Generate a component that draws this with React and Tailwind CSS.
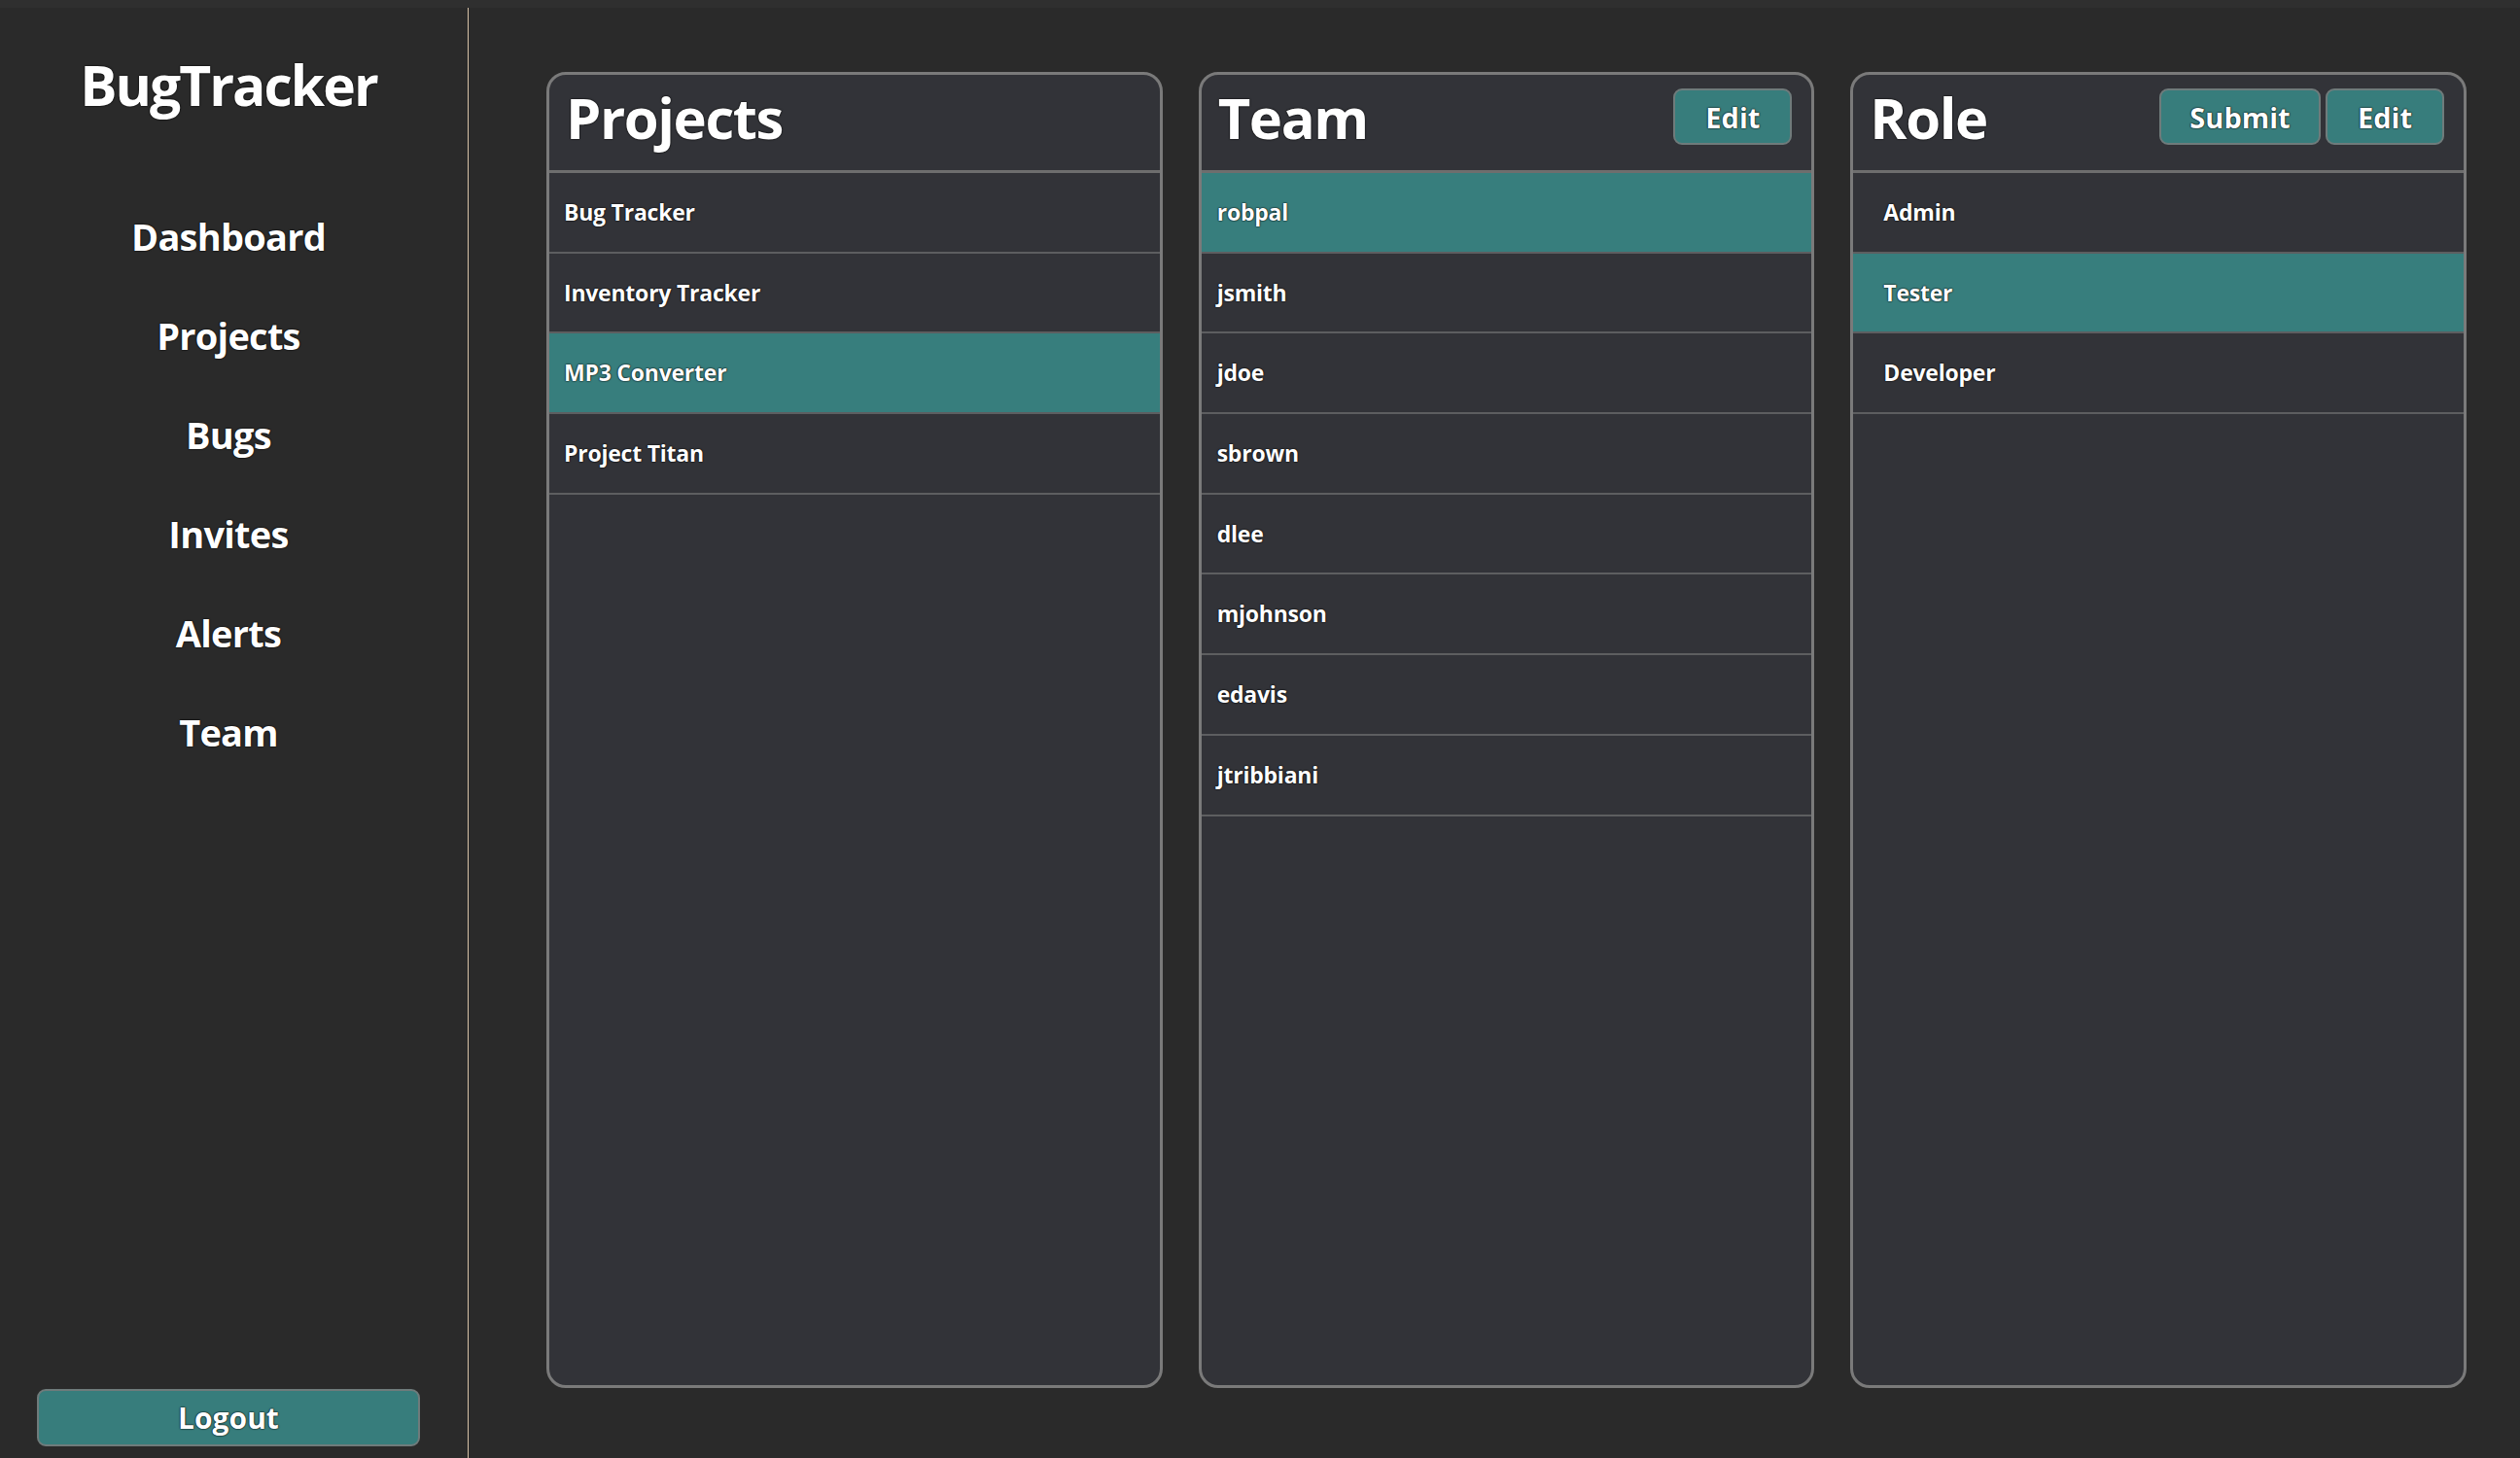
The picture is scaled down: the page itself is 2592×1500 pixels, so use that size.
import React from "react";

const navItems = ["Dashboard", "Projects", "Bugs", "Invites", "Alerts", "Team"];

function HeaderButton({ children, w }) {
  return (
    <button
      className={`h-[58px] ${w} rounded-[9px] border-2 border-[#6f7b7b] bg-[#377d7c] text-white font-bold text-[29px] leading-none flex items-center justify-center [text-shadow:0_0_2px_#000,0_0_1px_#000]`}
    >
      {children}
    </button>
  );
}

function Panel({ title, items, selected, buttons, rowPad }) {
  return (
    <div className="flex-1 min-w-0 flex flex-col rounded-[20px] border-[3px] border-[#7a7a7a] bg-[#323338] overflow-hidden">
      <div className="h-[101px] shrink-0 flex items-center justify-between pl-[17px] pr-[20px] border-b-[3px] border-[#6e6e6e]">
        <div className="text-white font-bold text-[58px] leading-none tracking-[-0.025em] [text-shadow:0_0_2px_#000,0_0_1px_#000] -mt-[10px]">
          {title}
        </div>
        <div className="flex gap-[5px] -mt-[12px]">{buttons}</div>
      </div>
      <div className="flex flex-col">
        {items.map((it, i) => (
          <div
            key={it}
            className={`h-[82.7px] flex items-center border-b-2 border-[#5d5e60] ${rowPad} ${
              i === selected ? "bg-[#377e7d]" : ""
            }`}
          >
            <span className="text-white font-bold text-[23px] leading-none tracking-[-0.01em] [text-shadow:0_0_2px_#000,0_0_1px_#000]">
              {it}
            </span>
          </div>
        ))}
      </div>
    </div>
  );
}

export default function App() {
  return (
    <div
      className="w-[2592px] h-[1500px] flex flex-col bg-[#2a2a2a] overflow-hidden"
      style={{ fontFamily: '"Open Sans", "Noto Sans", sans-serif' }}
    >
      <div className="h-[8px] shrink-0 bg-[#2f2f2f]" />
      <div className="flex-1 flex min-h-0">
        {/* Sidebar */}
        <div className="w-[482px] shrink-0 flex">
          <div className="w-[470px] flex flex-col">
            <div className="mt-[39px] h-[80px] flex items-center justify-center text-white font-bold text-[57px] leading-none tracking-[-0.035em] [text-shadow:0_0_2px_#000,0_0_1px_#000]">
              BugTracker
            </div>
            <nav className="mt-[65px] flex flex-col">
              {navItems.map((n) => (
                <div
                  key={n}
                  className="h-[102px] flex items-center justify-center text-white font-bold text-[38px] leading-none tracking-[-0.02em] [text-shadow:0_0_2px_#000,0_0_1px_#000]"
                >
                  {n}
                </div>
              ))}
            </nav>
            <div className="flex-1" />
            <button className="mx-[38px] mb-[12px] h-[59px] rounded-[9px] border-2 border-[#6f7b7b] bg-[#377d7c] text-white font-bold text-[30px] leading-none flex items-center justify-center [text-shadow:0_0_2px_#000,0_0_1px_#000]">
              Logout
            </button>
          </div>
          <div className="w-[11px]" />
          <div className="w-px bg-[#d6c1a6]" />
        </div>
        {/* Main */}
        <div className="flex-1 flex gap-[37px] pl-[80px] pr-[55px] pt-[66px] pb-[72px]">
          <Panel
            title="Projects"
            items={["Bug Tracker", "Inventory Tracker", "MP3 Converter", "Project Titan"]}
            selected={2}
            rowPad="pl-[15px]"
            buttons={null}
          />
          <Panel
            title="Team"
            items={["robpal", "jsmith", "jdoe", "sbrown", "dlee", "mjohnson", "edavis", "jtribbiani"]}
            selected={0}
            rowPad="pl-[16px]"
            buttons={<HeaderButton w="w-[122px]">Edit</HeaderButton>}
          />
          <Panel
            title="Role"
            items={["Admin", "Tester", "Developer"]}
            selected={1}
            rowPad="pl-[31px]"
            buttons={
              <>
                <HeaderButton w="w-[166px]">Submit</HeaderButton>
                <HeaderButton w="w-[122px]">Edit</HeaderButton>
              </>
            }
          />
        </div>
      </div>
    </div>
  );
}
